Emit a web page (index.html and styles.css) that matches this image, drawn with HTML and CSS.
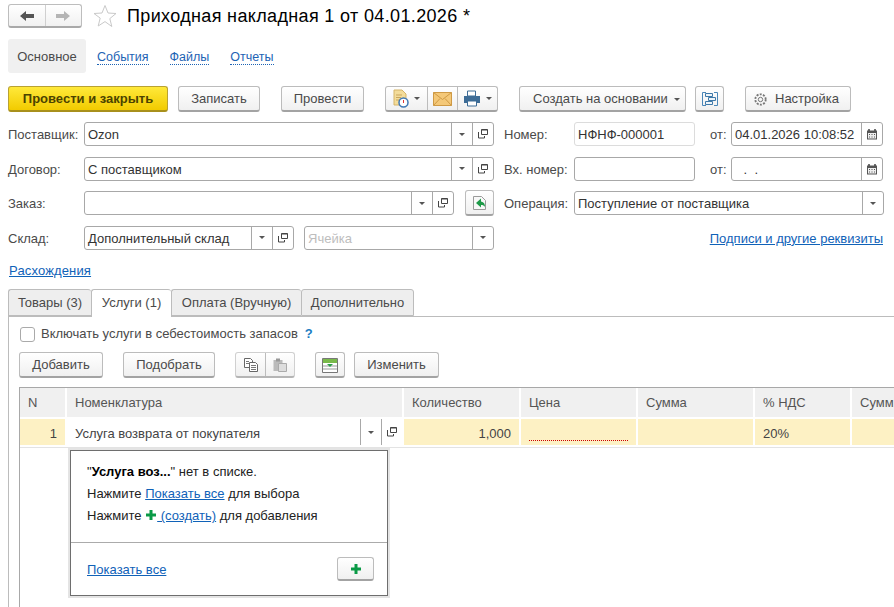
FILE: index.html
```html
<!DOCTYPE html>
<html lang="ru">
<head>
<meta charset="utf-8">
<title>Приходная накладная</title>
<link rel="stylesheet" href="styles.css">
</head>
<body>
<svg class="defs" width="0" height="0" aria-hidden="true">
  <defs>
    <symbol id="open" viewBox="0 0 10 10"><path d="M3.500.500h6v5h-6z" fill="#fff" stroke="#444"/><path d="M3.500 1h6" stroke="#444"/><path d="M.500 3v6h6V7" fill="none" stroke="#444"/></symbol>
    <symbol id="cal" viewBox="0 0 12 12"><path d="M1 2.500h10v9H1z" fill="#555"/><path d="M3 1v2M9 1v2" stroke="#444" stroke-width="1.500"/><path d="M2 5h8v5.500H2z" fill="#eee"/><path d="M3 6h1v1H3zM5.500 6h1v1h-1zM8 6h1v1H8zM3 8.500h1v1H3zM5.500 8.500h1v1h-1zM8 8.500h1v1H8z" fill="#555"/></symbol>
    <symbol id="plus" viewBox="0 0 12 12"><path d="M4.500 1h3v3.500H11v3H7.500V11h-3V7.500H1v-3h3.500z" fill="#0a9a46"/></symbol>
  </defs>
</svg>
<main class="page">
  <header class="head">
    <div class="nav">
      <span class="nav-cell"><svg width="16" height="12" viewBox="0 0 16 12"><path d="M1 6l6-5v3h8v4H7v3z" fill="#555"/></svg></span>
      <span class="nav-cell"><svg width="16" height="12" viewBox="0 0 16 12"><path d="M15 6L9 1v3H1v4h8v3z" fill="#b5b5b5"/></svg></span>
    </div>
    <svg class="star" width="24" height="24" viewBox="0 0 24 24"><path d="M12 1.500l3 7.500 8 .5-6.200 5.100 2 7.900L12 17.600 5.200 22l2-7.900L1 9.500l8-.5z" fill="#fff" stroke="#c9c9c9"/></svg>
    <h1 class="title">Приходная накладная 1 от 04.01.2026 *</h1>
  </header>

  <nav class="sections">
    <span class="section current">Основное</span>
    <a class="section-link">События</a>
    <a class="section-link">Файлы</a>
    <a class="section-link">Отчеты</a>
  </nav>

  <div class="commands">
    <button class="btn primary w-close">Провести и закрыть</button>
    <button class="btn w-save">Записать</button>
    <button class="btn w-post">Провести</button>
    <div class="btn group w-group">
      <span class="seg seg-a">
        <svg width="16" height="19" viewBox="0 0 16 19"><path d="M1 1h8l4 4v11H1z" fill="#f3dc9a" stroke="#d5b468"/><path d="M3 6h6M3 8.500h5M3 11h4" stroke="#c9a65c"/><circle cx="10.500" cy="13.500" r="4.500" fill="#fff" stroke="#3f78b5" stroke-width="1.500"/><path d="M10.500 11v3" stroke="#d33"/></svg>
        <i class="caret"></i>
      </span>
      <span class="seg seg-b"><svg width="19" height="14" viewBox="0 0 19 14"><path d="M.5.500h18v13H.5z" fill="#f4c878" stroke="#cf9a45"/><path d="M.5.500l9 7 9-7M.5 13.500l6.500-7M18.500 13.500l-6.500-7" fill="none" stroke="#cf9a45"/></svg></span>
      <span class="seg seg-c">
        <svg width="18" height="17" viewBox="0 0 18 17"><path d="M4.500 1h8v5h-8z" fill="#fff" stroke="#3d6c96"/><path d="M1 6h16v7h-3v-2H4v2H1z" fill="#3d6c96"/><path d="M4.500 11h9v5h-9z" fill="#fff" stroke="#3d6c96"/></svg>
        <i class="caret"></i>
      </span>
    </div>
    <button class="btn w-create">Создать на основании<i class="caret after"></i></button>
    <button class="btn w-struct"><svg width="16" height="16" viewBox="0 0 16 16"><path d="M4 1.500H.5v13H4M12 1.500h3.500v13H12" fill="none" stroke="#4a86b8"/><path d="M3.500 2.500h7v3h-7zM6.500 6.500h7v3h-7zM3.500 10.500h7v3h-7z" fill="#eef5fa" stroke="#3f78a8"/></svg></button>
    <button class="btn w-setup"><svg class="gear" width="15" height="15" viewBox="0 0 15 15"><circle cx="7.500" cy="7.500" r="2.200" fill="none" stroke="#777"/><circle cx="7.500" cy="7.500" r="5.200" fill="none" stroke="#777" stroke-width="1.800" stroke-dasharray="2 1.300"/></svg>Настройка</button>
  </div>

  <section class="form">
    <div class="col-left">
      <div class="row">
        <label class="lbl">Поставщик:</label>
        <div class="field grow"><span class="val">Ozon</span><span class="fb"><i class="caret"></i></span><span class="fb"><svg width="10" height="10"><use href="#open"/></svg></span></div>
      </div>
      <div class="row">
        <label class="lbl">Договор:</label>
        <div class="field grow"><span class="val">С поставщиком</span><span class="fb"><i class="caret"></i></span><span class="fb"><svg width="10" height="10"><use href="#open"/></svg></span></div>
      </div>
      <div class="row">
        <label class="lbl">Заказ:</label>
        <div class="field w-order"><span class="val"></span><span class="fb"><i class="caret"></i></span><span class="fb"><svg width="10" height="10"><use href="#open"/></svg></span></div>
        <button class="btn w-fill"><svg width="16" height="16" viewBox="0 0 16 16"><path d="M1.500 1.500h8l4 4v9h-12z" fill="#f8f8f8" stroke="#9a9a9a"/><path d="M9 3.500L4 8l5 4.500V10c2 0 3 .5 4 2 0-3-1-5-4-5.500z" fill="#1e9a48"/></svg></button>
      </div>
      <div class="row">
        <label class="lbl">Склад:</label>
        <div class="field w-store"><span class="val">Дополнительный склад</span><span class="fb"><i class="caret"></i></span><span class="fb"><svg width="10" height="10"><use href="#open"/></svg></span></div>
        <div class="field w-cell"><span class="val ph">Ячейка</span><span class="fb"><i class="caret"></i></span></div>
      </div>
    </div>
    <div class="col-right">
      <div class="row">
        <label class="lbl lbl-r">Номер:</label>
        <div class="field w-num ro"><span class="val">НФНФ-000001</span></div>
        <label class="lbl lbl-from">от:</label>
        <div class="field grow date"><span class="val">04.01.2026 10:08:52</span><span class="fb"><svg width="12" height="12"><use href="#cal"/></svg></span></div>
      </div>
      <div class="row">
        <label class="lbl lbl-r">Вх. номер:</label>
        <div class="field w-num"><span class="val"></span></div>
        <label class="lbl lbl-from">от:</label>
        <div class="field grow date"><span class="val dots">&nbsp;.&nbsp;&nbsp;.</span><span class="fb"><svg width="12" height="12"><use href="#cal"/></svg></span></div>
      </div>
      <div class="row">
        <label class="lbl lbl-r">Операция:</label>
        <div class="field grow"><span class="val">Поступление от поставщика</span><span class="fb"><i class="caret"></i></span></div>
      </div>
      <div class="row row-end"><a class="link req">Подписи и другие реквизиты</a></div>
    </div>
  </section>

  <a class="link diff">Расхождения</a>

  <div class="tabs">
    <span class="tab w-t1">Товары (3)</span>
    <span class="tab active w-t2">Услуги (1)</span>
    <span class="tab w-t3">Оплата (Вручную)</span>
    <span class="tab w-t4">Дополнительно</span>
  </div>

  <section class="panel">
    <div class="check-row">
      <span class="check"></span>
      <span class="check-text">Включать услуги в себестоимость запасов</span>
      <span class="help">?</span>
    </div>
    <div class="tools">
      <button class="btn w-add">Добавить</button>
      <button class="btn w-pick">Подобрать</button>
      <div class="btn group light w-copy">
        <span class="seg seg-copy"><svg width="16" height="16" viewBox="0 0 16 16"><path d="M1.500 1.500h6l2 2v7h-8z" fill="#fff" stroke="#666"/><path d="M6.500 5.500h6l2 2v7h-8z" fill="#fff" stroke="#666"/><path d="M8 8.500h5M8 10.500h5M8 12.500h5M3 4.500h3M3 6.500h3" stroke="#777"/></svg></span>
        <span class="seg seg-copy"><svg width="16" height="16" viewBox="0 0 16 16"><path d="M1.500 3h9v11h-9z" fill="#bbb"/><path d="M4 1.500h4v3H4z" fill="#999"/><path d="M6.500 6.500h8v8h-8z" fill="#ddd" stroke="#aaa"/></svg></span>
      </div>
      <button class="btn w-green"><svg width="16" height="15" viewBox="0 0 16 15"><path d="M.5.500h15v14H.5z" fill="#fff" stroke="#777"/><path d="M1 1h14v4H1z" fill="#79b94a"/><path d="M1 8h14M1 11h14" stroke="#999"/><path d="M5 6h6l-3 3z" fill="#2e9e4a"/></svg></button>
      <button class="btn w-edit">Изменить</button>
    </div>

    <div class="grid">
      <div class="th">N</div>
      <div class="th">Номенклатура</div>
      <div class="th">Количество</div>
      <div class="th">Цена</div>
      <div class="th">Сумма</div>
      <div class="th">% НДС</div>
      <div class="th">Сумм</div>
      <div class="td num">1</div>
      <div class="td edit"><span class="val">Услуга возврата от покупателя</span><span class="fb tall"><i class="caret"></i></span><span class="fb tall"><svg width="10" height="10"><use href="#open"/></svg></span></div>
      <div class="td num">1,000</div>
      <div class="td"><span class="required"></span></div>
      <div class="td"></div>
      <div class="td">20%</div>
      <div class="td"></div>
    </div>

    <aside class="popup">
      <div class="pop-body">
        <p class="pop-line">"<b>Услуга воз...</b>" нет в списке.</p>
        <p class="pop-line">Нажмите <a class="link">Показать все</a> для выбора</p>
        <p class="pop-line">Нажмите <svg class="pop-plus" width="12" height="12"><use href="#plus"/></svg><a class="link"> (создать)</a> для добавления</p>
      </div>
      <div class="pop-foot">
        <a class="link foot-link">Показать все</a>
        <button class="btn w-plus"><svg width="12" height="12"><use href="#plus"/></svg></button>
      </div>
    </aside>
  </section>
</main>
</body>
</html>
```
FILE: styles.css
```css
* { box-sizing: border-box; }
html, body { margin: 0; padding: 0; background: #fff; }
body { font: 13px/16px "Liberation Sans", Arial, sans-serif; color: #4a4a4a; overflow: hidden; }
.defs { position: absolute; }
.page { width: 894px; height: 607px; overflow: hidden; padding-left: 8px; position: relative; }
p { margin: 0; }
i { display: block; }

.head { display: flex; align-items: center; height: 24px; margin-top: 4px; }
.nav { display: flex; width: 74px; height: 24px; border: 1px solid #bdbdbd; border-bottom: 2px solid #a9a9a9; border-radius: 3px; background: linear-gradient(#fff, #f1f1f1); }
.nav-cell { flex: 1; display: flex; align-items: center; justify-content: center; }
.nav-cell + .nav-cell { border-left: 1px solid #d0d0d0; }
.star { margin-left: 11px; }
.title { margin: 0 0 0 10px; font: 400 18px/24px "Liberation Sans", Arial, sans-serif; letter-spacing: .35px; color: #000; }

.sections { display: flex; align-items: center; height: 34px; margin-top: 11px; }
.section { height: 34px; width: 78px; border-radius: 3px; background: #f0f0f0; text-align: center; line-height: 36px; }
.section-link { color: #1d63b4; border-bottom: 1px dotted #1d63b4; font-size: 12.500px; line-height: 14px; margin: 2px 0 0 11px; }
.section-link + .section-link { margin-left: 21px; }

.commands { display: flex; margin-top: 13px; height: 26px; }
.btn { display: flex; align-items: center; justify-content: center; height: 26px; padding: 1px 0 0; border: 1px solid #bcbcbc; border-bottom: 2px solid #a3a3a3; border-radius: 3px; background: linear-gradient(#fff, #f0f0f0); font: 13px/16px "Liberation Sans", Arial, sans-serif; color: #4a4a4a; flex: none; }
.primary { background: linear-gradient(#ffe93a, #f2cb00); border: 1px solid #b9a232; border-bottom: 2px solid #a8901c; font-weight: 700; color: #4b4300; }
.w-close { width: 160px; }
.w-save { width: 82px; margin-left: 10px; }
.w-post { width: 83px; margin-left: 21px; }
.w-group { width: 113px; margin-left: 21px; padding-top: 0; }
.w-create { width: 167px; margin-left: 21px; justify-content: flex-start; padding-left: 13px; }
.w-struct { width: 29px; margin-left: 9px; }
.w-setup { width: 106px; margin-left: 21px; justify-content: flex-start; padding-left: 7px; }
.gear { margin-right: 7px; }
.group { justify-content: flex-start; }
.seg { display: flex; align-items: center; justify-content: center; height: 100%; gap: 5px; }
.seg + .seg { border-left: 1px solid #bcbcbc; }
.seg-a { width: 41px; }
.seg-b { width: 30px; }
.seg-c { flex: 1; }
.caret { width: 0; height: 0; border-left: 3.500px solid transparent; border-right: 3.500px solid transparent; border-top: 3.500px solid #555; }
.caret.after { margin-left: 6px; }

.form { display: flex; margin-top: 10px; height: 140px; }
.col-left { width: 486px; }
.col-right { width: 380px; margin-left: 10px; }
.row { display: flex; align-items: center; height: 24px; margin-bottom: 10.600px; }
.row-end { justify-content: flex-end; padding-right: 1px; }
.lbl { width: 76px; flex: none; padding-top: 2px; }
.lbl-r { width: 70px; }
.lbl-from { width: 21px; margin-left: 15px; }
.field { display: flex; height: 24px; border: 1px solid #a8a8a8; border-radius: 3px; background: #fff; color: #333; align-items: stretch; }
.grow { flex: 1; min-width: 0; }
.date { margin-right: 1px; }
.val { flex: 1; min-width: 0; padding-left: 3px; line-height: 24px; white-space: nowrap; overflow: hidden; }
.ph { color: #bdbdbd; }
.dots { padding-left: 8px; }
.fb { width: 21px; flex: none; display: flex; align-items: center; justify-content: center; border-left: 1px solid #a8a8a8; }
.w-order { width: 370px; }
.w-fill { width: 29px; margin-left: 11px; }
.w-store { width: 210px; }
.w-cell { width: 190px; margin-left: 10px; }
.w-num { width: 121px; }
.ro { border-color: #dcdcdc; }
.link { color: #1062b8; text-decoration: underline; }
.req { margin-top: 2px; }

.diff { display: block; margin-left: 1px; line-height: 16px; width: max-content; margin-top: 1px; letter-spacing: .15px; }

.tabs { display: flex; margin-top: 10px; height: 28px; position: relative; z-index: 1; }
.tab { height: 27px; border: 1px solid #bcbcbc; border-right-width: 0; border-radius: 3px 3px 0 0; background: #eee; text-align: center; line-height: 26px; }
.tab.w-t4 { border-right-width: 1px; }
.tab.active { height: 28px; background: #fff; border-bottom: 0; }
.w-t1 { width: 83px; }
.w-t2 { width: 80px; }
.w-t3 { width: 130px; }
.w-t4 { width: 113px; }

.panel { position: relative; margin-top: -1px; height: 292px; border-top: 1px solid #bcbcbc; border-left: 1px solid #bcbcbc; padding-left: 10px; }
.check-row { display: flex; align-items: center; height: 16px; margin-top: 9px; }
.check { width: 15px; height: 15px; border: 1px solid #aaa; border-radius: 3px; background: #fff; margin-left: 1px; }
.check-text { margin-left: 6px; }
.help { margin-left: 7px; color: #1c7dc2; font-weight: 700; }
.tools { display: flex; margin-top: 10px; height: 26px; }
.w-add { width: 84px; }
.w-pick { width: 92px; margin-left: 20px; }
.w-copy { width: 60px; margin-left: 20px; padding-top: 0; }
.light { border-color: #d0d0d0; border-bottom-color: #b5b5b5; }
.seg-copy { width: 50%; }
.w-green { width: 30px; margin-left: 20px; }
.w-edit { width: 85px; margin-left: 9px; }

.grid { display: grid; grid-template-columns: 47px 337px 117px 117px 117px 97px 60px; grid-template-rows: 31px 28px; margin-top: 9px; border-top: 1px solid #a8a8a8; border-left: 1px solid #a8a8a8; height: 300px; width: 900px; align-content: start; position: relative; }
.th { background: #f0f0f0; border-right: 2px solid #fff; border-bottom: 2px solid #fff; padding-left: 8px; line-height: 29px; color: #555; box-shadow: 1px 0 0 #d8d8d8; }
.td { background: #fdf1c4; border-right: 2px solid #fff; border-bottom: 2px solid #fff; padding: 0 8px; line-height: 30px; color: #444; box-shadow: 0 1px 0 #e3e3e3; }
.num { text-align: right; padding-right: 8px; }
.edit { background: #fff; display: flex; padding: 0 0 0 8px; }
.edit .val { padding-left: 0; line-height: 30px; }
.fb.tall { height: 26px; }
.required { display: block; width: 100%; height: 22px; border-bottom: 1px dotted #c00; }
.popup { position: absolute; left: 61px; top: 133px; width: 318px; height: 146px; background: #fff; border: 1px solid #6e6e6e; box-shadow: 0 0 0 2px #e4e4e4; color: #222; z-index: 2; }
.pop-body { height: 92px; padding: 10px 16px 0; border-bottom: 1px solid #ababab; }
.pop-line { line-height: 22px; }
.pop-line b { color: #000; }
.pop-plus { vertical-align: -1px; }
.pop-foot { display: flex; justify-content: space-between; align-items: center; padding: 0 13px 0 16px; height: 52px; }
.foot-link { margin-top: 2px; }
.w-plus { width: 37px; height: 24px; }
```
